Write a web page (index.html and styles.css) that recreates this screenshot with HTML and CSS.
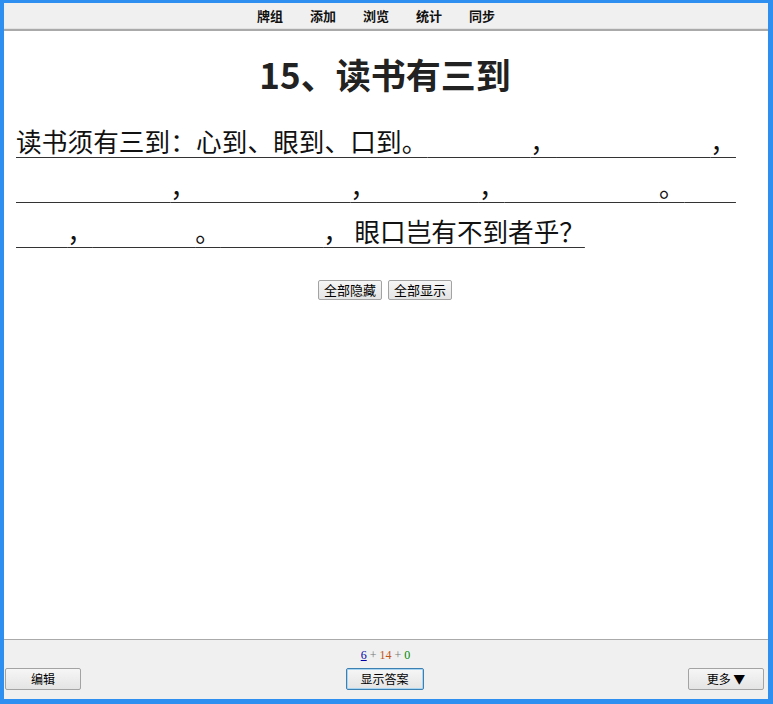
FILE: index.html
```html
<!DOCTYPE html>
<html lang="zh-CN">
  <head>
    <meta charset="UTF-8" />
    <meta name="viewport" content="width=device-width, initial-scale=1.0" />
    <title>读书有三到</title>
    <link rel="stylesheet" href="styles.css">
  </head>
  <body>
    <div class="frame">
      <nav class="topbar">
        <a href="#">牌组</a>
        <a href="#">添加</a>
        <a href="#">浏览</a>
        <a href="#">统计</a>
        <a href="#">同步</a>
      </nav>

      <main class="card">
        <h1>15、读书有三到</h1>
        <p class="text">读书须有三到：心到、眼到、口到。<span class="cloze">心不在此</span>，<span class="cloze">则眼不看仔细</span>，<span class="cloze">心眼既不专一</span>，<span class="cloze">却只漫浪诵读</span>，<span class="cloze">决不能记</span>，<span class="cloze">记亦不能久也</span>。<span class="cloze">三到之中</span>，<span class="cloze">心到最急</span>。<span class="cloze">心既到矣</span>， 眼口岂有不到者乎？</p>
        <div class="toggles">
          <button class="btn">全部隐藏</button>
          <button class="btn">全部显示</button>
        </div>
      </main>

      <footer class="bottombar">
        <div class="stats">
          <a href="#" class="new">6</a> + <span class="learn">14</span> + <span class="review">0</span>
        </div>
        <div class="actions">
          <button class="btn btn-bottom btn-edit">编辑</button>
          <button class="btn btn-bottom btn-answer">显示答案</button>
          <button class="btn btn-bottom btn-more">更多 ▼</button>
        </div>
      </footer>
    </div>
  </body>
</html>
```

FILE: styles.css
```css
html,
body {
  margin: 0;
  height: 100%;
}
body {
  font-family: "Noto Sans CJK SC", "Liberation Sans", sans-serif;
  color: #222;
}
.frame {
  box-sizing: border-box;
  height: 100vh;
  display: flex;
  flex-direction: column;
  border: solid #2f8ff0;
  border-width: 3px 5px 5px 4px;
  background-color: #fff;
}
.topbar {
  height: 26px;
  flex-shrink: 0;
  display: flex;
  justify-content: center;
  align-items: center;
  gap: 27px;
  padding-right: 20px;
  background-color: #f0f0f0;
  border-bottom: 2px solid #aaa;
  box-shadow: inset 0 -3px 0 -2px #e2e2e2;
}
.topbar a {
  font-size: 13px;
  font-weight: bold;
  color: #111;
  text-decoration: none;
  line-height: 16px;
}
.card {
  flex: 1;
  padding: 0 0 0 12px;
}
h1 {
  margin: 23px 0 24px;
  font-size: 35px;
  line-height: 40px;
  text-align: center;
  color: #222;
  padding-right: 14px;
}
.text {
  width: 720px;
  margin: 0;
  font-size: 25.6px;
  line-height: 45px;
  color: #111;
  text-align: justify;
  text-decoration: underline #333;
  text-decoration-thickness: 1px;
  text-underline-offset: 5px;
}
.cloze {
  color: transparent;
}
.toggles {
  display: flex;
  justify-content: center;
  gap: 6px;
  margin-top: 27px;
  padding-right: 14px;
}
.btn {
  font-family: "Noto Sans CJK SC", sans-serif;
  font-size: 13px;
  line-height: 16px;
  height: 20px;
  padding: 0 5px;
  color: #000;
  border: 1px solid #a3a3a3;
  border-radius: 2px;
  background: linear-gradient(#f6f6f6, #e4e4e4);
  cursor: pointer;
}
.bottombar {
  flex-shrink: 0;
  height: 60px;
  box-sizing: border-box;
  background-color: #f0f0f0;
  border-top: 1px solid #aaa;
  padding: 7px 4px 0 1px;
}
.stats {
  text-align: center;
  font-family: "Liberation Serif", serif;
  font-size: 12px;
  line-height: 16px;
  color: #777;
  padding-left: 2px;
}
.new {
  color: #00a;
}
.learn {
  color: #c35617;
}
.review {
  color: #080;
}
.actions {
  display: grid;
  grid-template-columns: 1fr auto 1fr;
  align-items: center;
  margin-top: 5px;
}
.btn-bottom {
  width: 76px;
  height: 22px;
  font-size: 12px;
}
.btn-edit {
  justify-self: start;
}
.btn-answer {
  width: 78px;
  border-color: #3c7fb1;
  box-shadow: inset 0 0 0 1px #a8d4f2;
}
.btn-more {
  justify-self: end;
}
```
